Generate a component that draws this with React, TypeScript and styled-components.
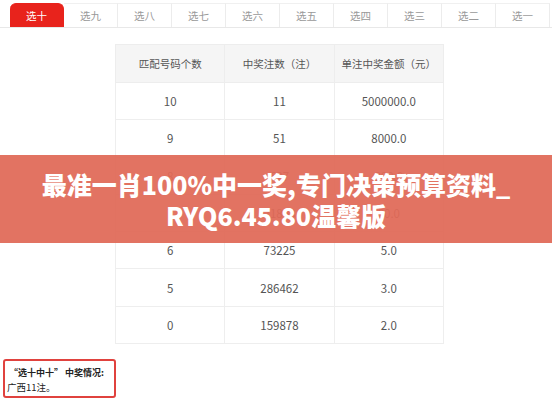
import React from 'react';
import styled, {createGlobalStyle} from "styled-components";

const GlobalStyle = createGlobalStyle`
  body {
    margin: 0;
    background: #ffffff;
    font-family: "Noto Sans CJK SC", "Noto Sans", sans-serif;
  }
`

const tabs = ['选十', '选九', '选八', '选七', '选六', '选五', '选四', '选三', '选二', '选一'];

const rows = [
    ['10', '11', '5000000.0'],
    ['9', '51', '8000.0'],
    ['8', '627', '800.0'],
    ['7', '21863', '80.0'],
    ['6', '73225', '5.0'],
    ['5', '286462', '3.0'],
    ['0', '159878', '2.0'],
];

export default function App() {
    return (
        <Page>
            <GlobalStyle/>
            <TabBar>
                {tabs.map((t, i) => (
                    <Tab key={t} $active={i === 0}>{t}</Tab>
                ))}
            </TabBar>

            <PrizeTable>
                <thead>
                <tr>
                    <HeadCell>匹配号码个数</HeadCell>
                    <HeadCell>中奖注数（注）</HeadCell>
                    <HeadCell>单注中奖金额（元）</HeadCell>
                </tr>
                </thead>
                <tbody>
                {rows.map(r => (
                    <tr key={r[0]}>
                        {r.map((c, i) => <Cell key={i}>{c}</Cell>)}
                    </tr>
                ))}
                </tbody>
            </PrizeTable>

            <Note>
                <NoteTitle>“选十中十” 中奖情况:</NoteTitle>
                <NoteText>广西11注。</NoteText>
            </Note>

            <Banner>
                <BannerText>最准一肖100%中一奖,专门决策预算资料_<br/>RYQ6.45.80温馨版</BannerText>
            </Banner>
        </Page>
    );
}

const Page = styled.div`
  position: relative;
  width: 552px;
  height: 400px;
  overflow: hidden;
  padding-top: 3px;
  box-sizing: border-box;
`

const TabBar = styled.div`
  display: flex;
  padding-left: 10px;
  height: 24px;
  border-bottom: 1px solid #e8e8e8;
`

const Tab = styled.div<{$active?: boolean}>`
  width: 54px;
  height: 24px;
  box-sizing: border-box;
  display: flex;
  align-items: center;
  justify-content: center;
  font-size: 10.5px;
  color: ${p => p.$active ? '#ffffff' : '#999999'};
  background: ${p => p.$active ? '#e8231c' : '#ffffff'};
  border-radius: ${p => p.$active ? '6px 6px 0 0' : '0'};
  border-top: 1px solid ${p => p.$active ? '#e8231c' : '#f0f0f0'};
  border-right: 1px solid ${p => p.$active ? '#e8231c' : '#ececec'};
`

const PrizeTable = styled.table`
  margin: 16px 0 0 115px;
  width: 329px;
  border-collapse: collapse;
  table-layout: fixed;
  font-size: 11.5px;
  color: #555;
`

const HeadCell = styled.th`
  height: 37px;
  padding: 0;
  font-weight: normal;
  font-size: 10.5px;
  color: #555;
  background: #f5f5f5;
  border: 1px solid #ededed;
  text-align: center;
`

const Cell = styled.td`
  height: 36.3px;
  padding: 0;
  text-align: center;
  border: 1px solid #eeeeee;
`

const Note = styled.div`
  margin: 15px 0 0 3px;
  width: 113px;
  height: 39px;
  box-sizing: border-box;
  border: 2px solid #e0423e;
  border-radius: 3px;
  padding: 5px 0 0 2px;
  font-size: 9px;
  line-height: 14px;
  color: #222;
`

const NoteTitle = styled.div`
  font-weight: bold;
  padding-left: 2px;
`

const NoteText = styled.div`
  font-size: 9.5px;
`

const Banner = styled.div`
  position: absolute;
  left: 0;
  right: 0;
  top: 155px;
  height: 88px;
  display: flex;
  align-items: center;
  justify-content: center;
  background: rgba(224, 106, 88, 0.94);
`

const BannerText = styled.div`
  color: #ffffff;
  font-weight: 900;
  font-size: 25px;
  line-height: 31px;
  text-align: center;
  padding-top: 1px;
`
